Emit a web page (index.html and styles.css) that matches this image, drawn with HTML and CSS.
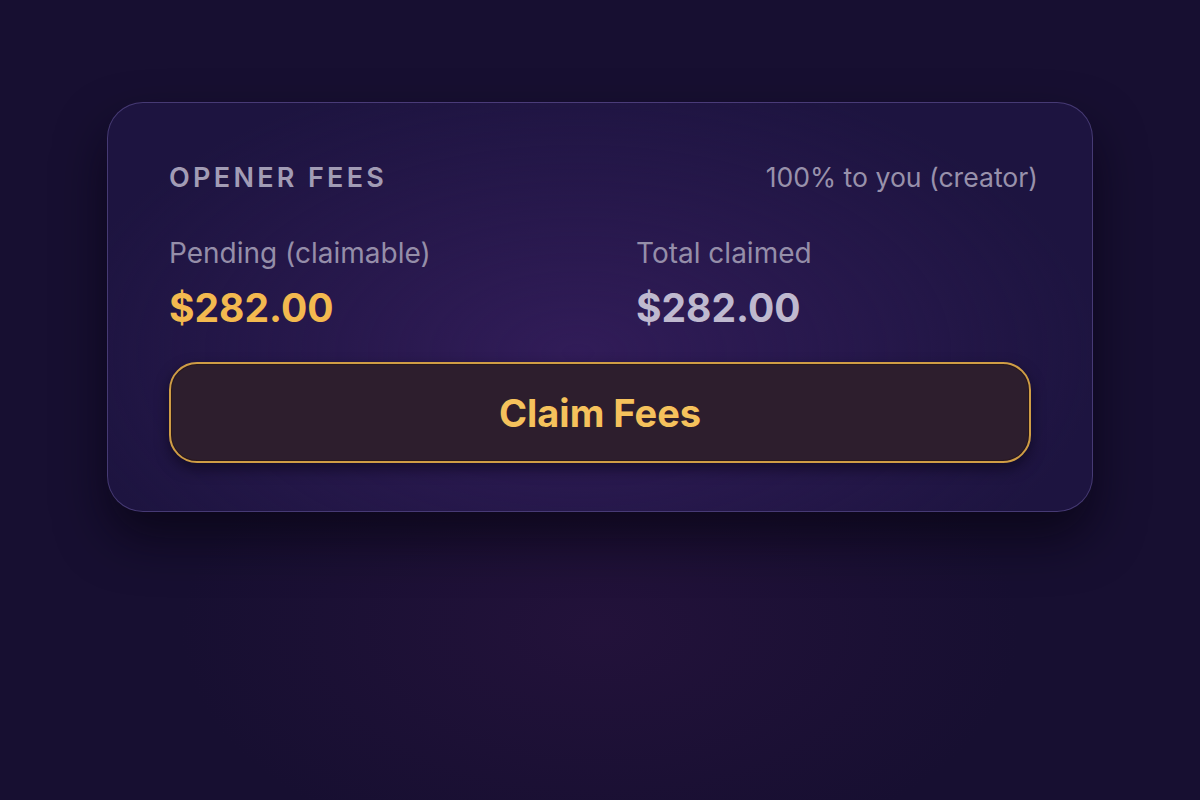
FILE: index.html
```html
<!DOCTYPE html>
<html lang="en">
<head>
<meta charset="utf-8">
<title>Opener Fees</title>
<link rel="stylesheet" href="styles.css">
</head>
<body>
<main class="page">
  <section class="card">
    <header class="card-head">
      <h2 class="title">OPENER FEES</h2>
      <span class="share">100% to you (creator)</span>
    </header>
    <div class="stats">
      <div class="stat">
        <div class="stat-label">Pending (claimable)</div>
        <div class="stat-value gold">$282.00</div>
      </div>
      <div class="stat">
        <div class="stat-label">Total claimed</div>
        <div class="stat-value muted">$282.00</div>
      </div>
    </div>
    <button class="claim" type="button">Claim Fees</button>
  </section>
</main>
</body>
</html>
```

FILE: styles.css
```css
* { box-sizing: border-box; }
html, body { margin: 0; height: 100%; }
body {
  background:
    radial-gradient(ellipse 420px 240px at 600px 630px, rgba(52, 22, 72, 0.4), rgba(52, 22, 72, 0) 100%),
    #170f31;
  font-family: Inter, "Noto Sans", "Liberation Sans", sans-serif;
  overflow: hidden;
}
.page {
  display: flex;
  justify-content: center;
  padding-top: 102px;
}
.card {
  width: 986px;
  height: 410px;
  border: 1.5px solid rgba(112, 96, 168, 0.5);
  border-radius: 36px;
  background:
    radial-gradient(ellipse 520px 290px at 470px 250px, rgba(54, 30, 94, 0.8), rgba(40, 24, 76, 0) 100%),
    #1d1440;
  box-shadow: 0 26px 50px rgba(6, 3, 16, 0.65);
  padding: 61px 61px 0 61px;
  display: flex;
  flex-direction: column;
}
.card-head {
  display: flex;
  justify-content: space-between;
  align-items: baseline;
}
.title {
  margin: 0;
  font-size: 27px;
  line-height: 27px;
  font-weight: 600;
  letter-spacing: 3.3px;
  color: #a29cb5;
}
.share {
  font-size: 26.6px;
  line-height: 27px;
  font-weight: 400;
  color: #9891ab;
  margin-right: -7px;
}
.stats {
  margin-top: 49px;
  display: grid;
  grid-template-columns: 1fr 1fr;
  column-gap: 72px;
}
.stat-label {
  font-size: 28px;
  line-height: 26px;
  color: #958ea9;
}
.stat-value {
  margin-top: 22px;
  font-size: 39px;
  line-height: 39px;
  font-weight: 700;
}
.gold { color: #f3b94f; }
.muted { color: #bfb9cf; }
.claim {
  margin-top: 35px;
  height: 101px;
  width: 100%;
  border: 2px solid #cf9d45;
  border-radius: 28px;
  background: #2d1e2d;
  box-shadow: 0 6px 14px rgba(8, 4, 18, 0.55), inset 0 0 0 1px rgba(40, 22, 20, 0.7);
  color: #f5c25c;
  font-family: Inter, "Noto Sans", "Liberation Sans", sans-serif;
  font-size: 38px;
  font-weight: 700;
  cursor: pointer;
}
```
